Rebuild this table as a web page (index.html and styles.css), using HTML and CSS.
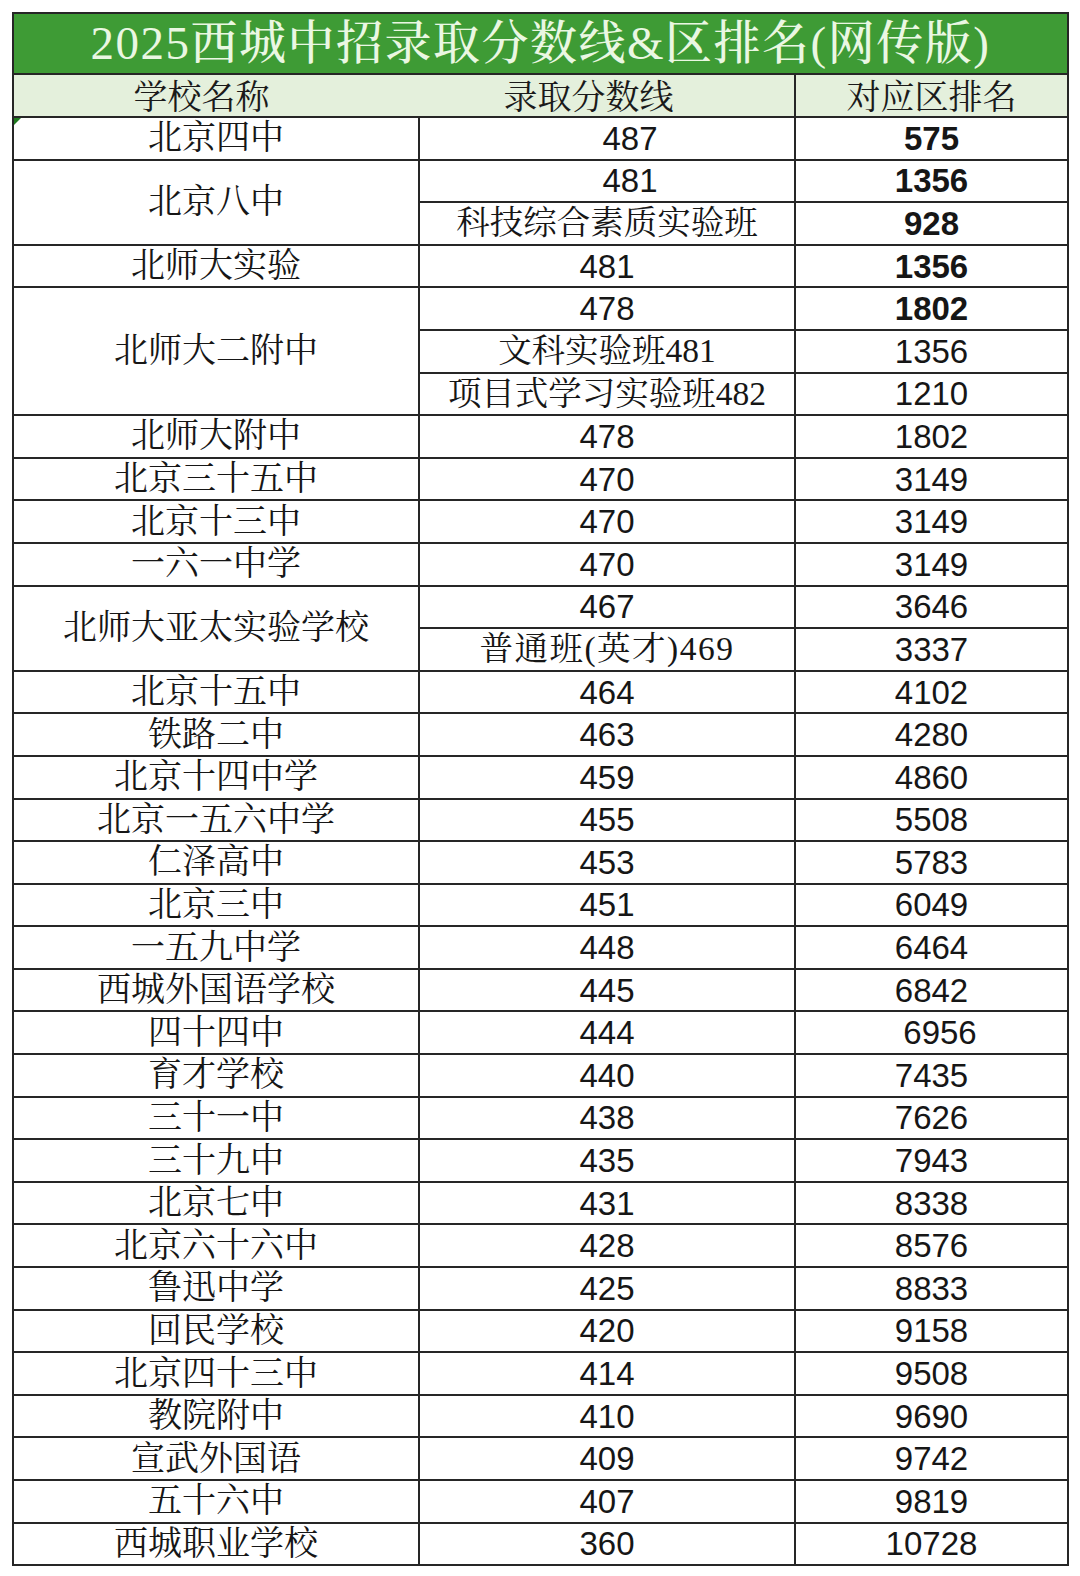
FILE: index.html
```html
<!DOCTYPE html>
<html lang="zh-CN">
<head>
<meta charset="utf-8">
<title>2025西城中招录取分数线&amp;区排名(网传版)</title>
<link rel="stylesheet" href="styles.css">
</head>
<body>
<div class="page">
<table class="score-table">
  <colgroup>
    <col class="c-name"><col class="c-score"><col class="c-rank">
  </colgroup>
  <thead>
    <tr class="title-row"><th colspan="3" class="title">2025西城中招录取分数线&amp;区排名(网传版)</th></tr>
    <tr class="head-row">
      <th class="h1">学校名称</th>
      <th class="h2">录取分数线</th>
      <th>对应区排名</th>
    </tr>
  </thead>
  <tbody>
    <tr><td class="name first">北京四中<span class="flag"></span></td><td class="num shift">487</td><td class="num b">575</td></tr>
    <tr><td class="name" rowspan="2">北京八中</td><td class="num shift">481</td><td class="num b">1356</td></tr>
    <tr><td class="txt">科技综合素质实验班</td><td class="num b">928</td></tr>
    <tr><td class="name">北师大实验</td><td class="num">481</td><td class="num b">1356</td></tr>
    <tr><td class="name" rowspan="3">北师大二附中</td><td class="num">478</td><td class="num b">1802</td></tr>
    <tr><td class="txt">文科实验班481</td><td class="num">1356</td></tr>
    <tr><td class="txt">项目式学习实验班482</td><td class="num">1210</td></tr>
    <tr><td class="name">北师大附中</td><td class="num">478</td><td class="num">1802</td></tr>
    <tr><td class="name">北京三十五中</td><td class="num">470</td><td class="num">3149</td></tr>
    <tr><td class="name">北京十三中</td><td class="num">470</td><td class="num">3149</td></tr>
    <tr><td class="name">一六一中学</td><td class="num">470</td><td class="num">3149</td></tr>
    <tr><td class="name" rowspan="2">北师大亚太实验学校</td><td class="num">467</td><td class="num">3646</td></tr>
    <tr><td class="txt wide">普通班(英才)469</td><td class="num">3337</td></tr>
    <tr><td class="name">北京十五中</td><td class="num">464</td><td class="num">4102</td></tr>
    <tr><td class="name">铁路二中</td><td class="num">463</td><td class="num">4280</td></tr>
    <tr><td class="name">北京十四中学</td><td class="num">459</td><td class="num">4860</td></tr>
    <tr><td class="name">北京一五六中学</td><td class="num">455</td><td class="num">5508</td></tr>
    <tr><td class="name">仁泽高中</td><td class="num">453</td><td class="num">5783</td></tr>
    <tr><td class="name">北京三中</td><td class="num">451</td><td class="num">6049</td></tr>
    <tr><td class="name">一五九中学</td><td class="num">448</td><td class="num">6464</td></tr>
    <tr><td class="name">西城外国语学校</td><td class="num">445</td><td class="num">6842</td></tr>
    <tr><td class="name">四十四中</td><td class="num">444</td><td class="num shift-sm">6956</td></tr>
    <tr><td class="name">育才学校</td><td class="num">440</td><td class="num">7435</td></tr>
    <tr><td class="name">三十一中</td><td class="num">438</td><td class="num">7626</td></tr>
    <tr><td class="name">三十九中</td><td class="num">435</td><td class="num">7943</td></tr>
    <tr><td class="name">北京七中</td><td class="num">431</td><td class="num">8338</td></tr>
    <tr><td class="name">北京六十六中</td><td class="num">428</td><td class="num">8576</td></tr>
    <tr><td class="name">鲁迅中学</td><td class="num">425</td><td class="num">8833</td></tr>
    <tr><td class="name">回民学校</td><td class="num">420</td><td class="num">9158</td></tr>
    <tr><td class="name">北京四十三中</td><td class="num">414</td><td class="num">9508</td></tr>
    <tr><td class="name">教院附中</td><td class="num">410</td><td class="num">9690</td></tr>
    <tr><td class="name">宣武外国语</td><td class="num">409</td><td class="num">9742</td></tr>
    <tr><td class="name">五十六中</td><td class="num">407</td><td class="num">9819</td></tr>
    <tr><td class="name">西城职业学校</td><td class="num">360</td><td class="num">10728</td></tr>
  </tbody>
</table>
</div>
</body>
</html>
```

FILE: styles.css
```css
html, body {
  margin: 0;
  padding: 0;
  background: #ffffff;
}

.page {
  padding: 12px 0 0 12px;
}

.score-table {
  width: 1055px;
  border-collapse: collapse;
  table-layout: fixed;
  color: #161616;
  font-family: "Liberation Serif", "Noto Serif CJK SC", "Noto Sans CJK SC", serif;
}

.c-name { width: 406px; }
.c-score { width: 376px; }
.c-rank { width: 273px; }

.score-table th,
.score-table td {
  border: 2px solid #262626;
  padding: 0;
  text-align: center;
  vertical-align: middle;
  white-space: nowrap;
}

.title-row { height: 61px; }

.title {
  background: #3e9b35;
  color: #eaf7e2;
  font-size: 47px;
  font-weight: 500;
  letter-spacing: 1.5px;
  line-height: 1;
  padding-top: 6px;
}

.head-row { height: 43px; }

.head-row th {
  background: #e4f0dc;
  font-size: 34px;
  font-weight: 400;
  line-height: 1;
  padding-top: 4px;
  color: #1a1a1a;
}

.head-row .h1 {
  border-right: hidden;
  padding-right: 30px;
}

.head-row .h2 {
  padding-right: 36px;
}

.score-table tbody tr {
  height: 42.6px;
}

.name,
.txt {
  font-size: 34px;
  line-height: 20px;
  padding-top: 18px;
  font-weight: 400;
}

.txt {
  font-size: 33.5px;
  padding-top: 15px;
}

.txt.wide {
  letter-spacing: 1.5px;
}

.num {
  font-family: "Liberation Sans", Arial, sans-serif;
  font-size: 33px;
  line-height: 1;
  padding-top: 2px;
}

.num.b {
  font-weight: 700;
}

.num.shift {
  padding-left: 46px;
}

.num.shift-sm {
  padding-left: 17px;
}

.first {
  position: relative;
}

.flag {
  position: absolute;
  left: 0;
  top: 0;
  width: 0;
  height: 0;
  border-top: 7px solid #1f7a1f;
  border-right: 7px solid transparent;
}
```
